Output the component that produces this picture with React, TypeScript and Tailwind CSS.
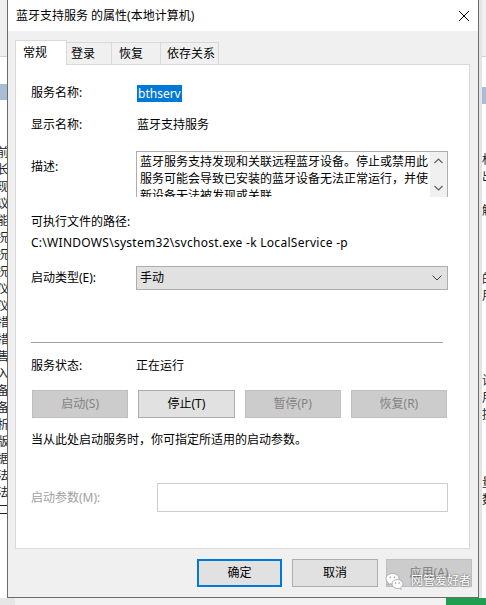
import React from "react";

const leftChars = ["前","长","现","议","能","况","况","况","仪","仪","措","措","售","入","备","备","析","版","据","法","法","二"];
const rightChars = ["权","出","","解","","","","的","用","","","","","设","用","提","","","","量","数"];

function LeftStrip() {
  return (
    <div className="w-[7px] h-full overflow-hidden flex flex-col bg-white">
      <div className="h-[57px] bg-[#f0f0f0] border-b border-[#d0d0d0] shrink-0" />
      <div className="h-[27px] shrink-0" />
      <div className="h-[16px] bg-[#a9bdd6] shrink-0" />
      <div className="h-[44px] shrink-0" />
      {leftChars.map((c, i) => (
        <div key={i} className="h-[17px] leading-[17px] shrink-0 w-[20px] ml-[-11px] text-right text-[12px] text-[#222]">
          {c}
        </div>
      ))}
      <div className="flex-1" />
    </div>
  );
}

function RightStrip() {
  return (
    <div className="w-[7px] h-full overflow-hidden flex flex-col bg-white border-l-[3px] border-[#e4e4e4]">
      <div className="h-[57px] bg-[#f0f0f0] border-b border-[#d0d0d0] shrink-0" />
      <div className="h-[30px] shrink-0" />
      <div className="h-[17px] bg-[#a9bdd6] shrink-0" />
      <div className="h-[47px] shrink-0" />
      {rightChars.map((c, i) => (
        <div key={i} className="h-[17px] leading-[17px] shrink-0 w-[20px] text-left text-[12px] text-[#222]">
          {c}
        </div>
      ))}
      <div className="flex-1" />
    </div>
  );
}

function Chevron({ dir }: { dir: "up" | "down" }) {
  return (
    <svg width="9" height="6" viewBox="0 0 9 6">
      {dir === "up" ? (
        <polyline points="0.5,5 4.5,1 8.5,5" fill="none" stroke="#606060" strokeWidth="1.2" />
      ) : (
        <polyline points="0.5,1 4.5,5 8.5,1" fill="none" stroke="#606060" strokeWidth="1.2" />
      )}
    </svg>
  );
}

function WeChatIcon() {
  return (
    <svg width="19" height="18" viewBox="0 0 19 18">
      <path d="M7.5 1.5C3.9 1.5 1 3.9 1 6.8c0 1.7 1 3.2 2.5 4.2L2.8 13l2.4-1.2c.7.2 1.5.3 2.3.3 3.6 0 6.5-2.4 6.5-5.3S11.1 1.5 7.5 1.5z" fill="#ffffff" stroke="#a0a0a0" strokeWidth="0.8" />
      <path d="M12.5 7.5c-3 0-5.5 2-5.5 4.5s2.5 4.5 5.5 4.5c.6 0 1.2-.1 1.7-.2l2 1-.5-1.7c1.4-.8 2.3-2.1 2.3-3.6 0-2.5-2.5-4.5-5.5-4.5z" fill="#ffffff" stroke="#a0a0a0" strokeWidth="0.8" />
      <circle cx="5.3" cy="5.2" r="0.8" fill="#909090" />
      <circle cx="9.4" cy="5.2" r="0.8" fill="#909090" />
      <circle cx="10.6" cy="11" r="0.7" fill="#909090" />
      <circle cx="14.2" cy="11" r="0.7" fill="#909090" />
    </svg>
  );
}

function Btn({ label, disabled }: { label: string; disabled?: boolean }) {
  return (
    <div
      className={
        disabled
          ? "h-[28px] flex items-center justify-center bg-[#cccccc] border border-[#bfbfbf] text-[#838383]"
          : "h-[28px] flex items-center justify-center bg-[#e1e1e1] border border-[#adadad] text-black"
      }
    >
      {label}
    </div>
  );
}

function Panel() {
  return (
    <div className="h-[485px] border border-[#d9d9d9] bg-white flex flex-col pl-[15px]">
      <div className="mt-[18px] h-[20px] flex items-center">
        <div className="w-[106px]">服务名称:</div>
        <div className="h-[17px] px-[1px] flex items-center bg-[#0078d7] text-white leading-[17px]">bthserv</div>
      </div>
      <div className="mt-[12px] h-[20px] flex items-center">
        <div className="w-[106px]">显示名称:</div>
        <div>蓝牙支持服务</div>
      </div>
      <div className="mt-[16px] h-[46px] flex">
        <div className="w-[105px] pt-[7px] leading-[17px]">描述:</div>
        <div className="w-[312px] h-[46px] border-l border-t border-r border-[#abadb3] flex overflow-hidden">
          <div className="flex-1 pl-[3px] pt-[1px] leading-[17px] whitespace-nowrap overflow-hidden">
            <div>蓝牙服务支持发现和关联远程蓝牙设备。停止或禁用此</div>
            <div>服务可能会导致已安装的蓝牙设备无法正常运行，并使</div>
            <div>新设备无法被发现或关联</div>
          </div>
          <div className="w-[17px] bg-[#f0f0f0] flex flex-col items-center pt-[6px]">
            <Chevron dir="up" />
            <div className="h-[21px]" />
            <Chevron dir="down" />
          </div>
        </div>
      </div>
      <div className="mt-[15px] h-[20px] flex items-center">可执行文件的路径:</div>
      <div className="mt-[1px] h-[20px] flex items-center whitespace-nowrap tracking-[0.28px]">C:\WINDOWS\system32\svchost.exe -k LocalService -p</div>
      <div className="mt-[13px] h-[24px] flex items-center">
        <div className="w-[105px]">启动类型(E):</div>
        <div className="w-[312px] h-[24px] bg-[#e1e1e1] border border-[#adadad] flex items-center justify-between pl-[3px] pr-[5px]">
          <span>手动</span>
          <svg width="10" height="6" viewBox="0 0 10 6">
            <polyline points="0.5,0.5 5,5 9.5,0.5" fill="none" stroke="#404040" strokeWidth="1" />
          </svg>
        </div>
      </div>
      <div className="mt-[52px] h-px w-[412px] bg-[#a0a0a0]" />
      <div className="mt-[13px] h-[20px] flex items-center">
        <div className="w-[105px]">服务状态:</div>
        <div>正在运行</div>
      </div>
      <div className="mt-[14px] ml-[1px] w-[415px] grid grid-cols-4 gap-[10px]">
        <Btn label="启动(S)" disabled />
        <Btn label="停止(T)" />
        <Btn label="暂停(P)" disabled />
        <Btn label="恢复(R)" disabled />
      </div>
      <div className="mt-[12px] h-[20px] flex items-center">当从此处启动服务时，你可指定所适用的启动参数。</div>
      <div className="mt-[33px] h-[29px] flex items-center">
        <div className="w-[126px] text-[#a0a0a0]">启动参数(M):</div>
        <div className="w-[291px] h-[29px] border border-[#cccccc] bg-white" />
      </div>
    </div>
  );
}

function Dialog() {
  return (
    <div className="w-[472px] h-[598px] border-l border-r border-b border-[#6b6b6b] flex flex-col">
      <div className="h-[31px] bg-white flex items-center justify-between pl-[8px] pr-[9px]">
        <span>蓝牙支持服务 的属性(本地计算机)</span>
        <svg width="10" height="10" viewBox="0 0 10 10">
          <line x1="0" y1="0" x2="10" y2="10" stroke="#000" strokeWidth="1" />
          <line x1="10" y1="0" x2="0" y2="10" stroke="#000" strokeWidth="1" />
        </svg>
      </div>
      <div className="flex-1 bg-[#f0f0f0] flex flex-col pl-[7px] pr-[8px] pt-[9px]">
        <div className="h-[24px] flex items-end relative z-10">
          <div className="h-[25px] w-[52px] mb-[-1px] bg-white border-l border-t border-r border-[#d9d9d9] pl-[7px] flex items-center">常规</div>
          <div className="h-[22px] w-[45px] border-t border-r border-[#d9d9d9] pl-[4px] flex items-center">登录</div>
          <div className="h-[22px] w-[49px] border-t border-r border-[#d9d9d9] pl-[7px] flex items-center">恢复</div>
          <div className="h-[22px] w-[58px] border-t border-r border-[#d9d9d9] pl-[6px] flex items-center">依存关系</div>
        </div>
        <Panel />
        <div className="mt-[10px] mr-[-2px] flex justify-end relative">
          <div className="w-[85px] h-[28px] bg-[#e1e1e1] border-2 border-[#0078d7] flex items-center justify-center">确定</div>
          <div className="ml-[10px] w-[86px] h-[28px] bg-[#e1e1e1] border border-[#adadad] flex items-center justify-center">取消</div>
          <div className="ml-[8px] w-[86px] h-[28px] bg-[#cccccc] border border-[#bfbfbf] text-[#838383] flex items-center justify-center">应用(A)</div>
          <div className="absolute right-[1px] top-[13px] flex items-center gap-[7px]">
            <WeChatIcon />
            <span className="text-white text-[12px] [text-shadow:0_0_2px_rgba(0,0,0,0.7)]">网管爱好者</span>
          </div>
        </div>
      </div>
    </div>
  );
}

export default function App() {
  return (
    <div className="w-[486px] h-[605px] overflow-hidden flex flex-col bg-white text-[12px] text-black font-['Noto_Sans','Noto_Sans_CJK_SC',sans-serif]">
      <div className="flex h-[598px] shrink-0">
        <LeftStrip />
        <Dialog />
        <RightStrip />
      </div>
      <div className="flex h-[7px] shrink-0">
        <div className="w-[15px] bg-[#e6e6e6]" />
        <div className="w-[431px] bg-[#f2f2f2]" />
        <div className="flex-1 bg-[#1e9f4f]" />
      </div>
    </div>
  );
}
